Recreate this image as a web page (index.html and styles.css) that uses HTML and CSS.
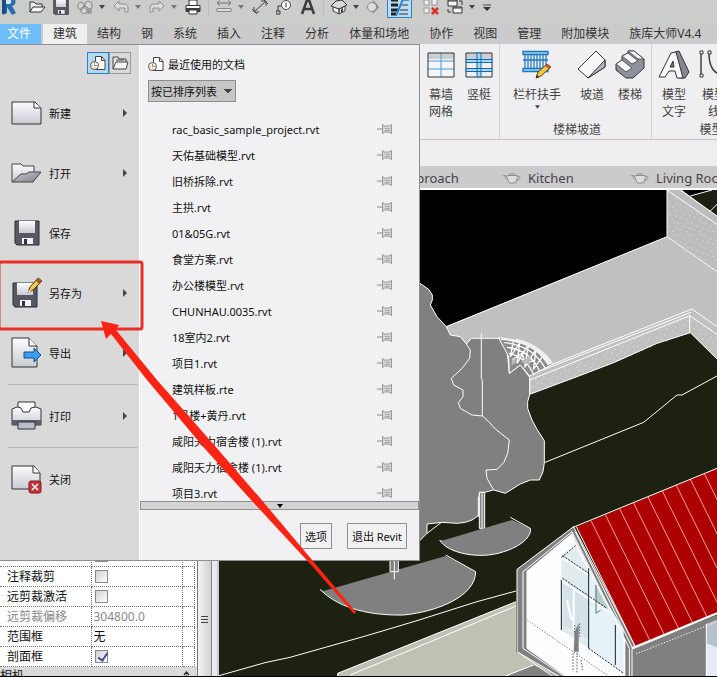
FILE: index.html
```html
<!DOCTYPE html>
<html lang="zh-CN">
<head>
  <meta charset="utf-8">
  <title>Revit</title>
  <link rel="stylesheet" href="styles.css">
</head>
<body>
  <svg class="defs" aria-hidden="true">
    <defs>
      <linearGradient id="metal" x1="0" y1="0" x2="0" y2="1">
        <stop offset="0" stop-color="#fdfdfe"/>
        <stop offset="1" stop-color="#c9cbd2"/>
      </linearGradient>
      <linearGradient id="steel" x1="0" y1="0" x2="1" y2="1">
        <stop offset="0" stop-color="#c8cad0"/>
        <stop offset="1" stop-color="#7e828b"/>
      </linearGradient>
      <symbol id="pin" viewBox="0 0 16 12">
        <path d="M0 6h5" stroke="#8c8c8c" fill="none"/>
        <path d="M5.5 1.500v9l2-1.500h4l3 1.500v-9l-3 1.500h-4z" fill="#d4d4d4" stroke="#999"/>
        <path d="M8 5.500h5M8 7.500h5" stroke="#aaa"/>
      </symbol>
      <symbol id="teapot" viewBox="0 0 18 12">
        <path d="M4 3.500h10c1 3-.5 5-2 7.500H6.500C5 8.500 3.500 6 4 3.500z" fill="#dcdedd" stroke="#8b908e"/>
        <path d="M4.500 8C2.500 7 2.500 4.500.5 3.500h2L4 5M14 4.500c3-1 3.500.5 2.500 2S14.500 8.500 13 9M5.500 3.500c1-2.500 6-2.500 7 0" fill="none" stroke="#8b908e"/>
      </symbol>
      <symbol id="caret" viewBox="0 0 6 4">
        <path d="M0 0h6L3 4z"/>
      </symbol>
      <symbol id="doc-clock" viewBox="0 0 18 18">
        <path d="M6.500 2.500h6l3.500 4v9H6.500z" fill="#fff" stroke="#444"/>
        <path d="M12.500 2.500v4H16" fill="none" stroke="#444"/>
        <circle cx="5.500" cy="11.500" r="4" fill="#fff" stroke="#555"/>
        <path d="M5.500 8.500v3h3M2.500 11.500h1M5.500 13.500v1" fill="none" stroke="#c77b45"/>
      </symbol>
      <symbol id="disk" viewBox="0 0 26 26">
        <path d="M1 1h24v24H3l-2-2z" fill="#565961" stroke="#2b2d33"/>
        <path d="M5 1h16v12H5z" fill="url(#metal)"/>
        <path d="M8 18h11v6H8z" fill="#f3f3f5"/>
        <path d="M10 19h3v5h-3z" fill="#333"/>
      </symbol>
      <pattern id="speckle" width="41" height="37" patternUnits="userSpaceOnUse">
        <path d="M3 5h3M19 14h3M33 3h3M10 25h3M27 30h3M37 20h3" stroke="#ededed" stroke-width="3"/>
      </pattern>
    </defs>
  </svg>

  <div class="app">
    <header class="quickbar">
      <button class="quick-logo" aria-label="Revit"><svg width="21" height="20" viewBox="0 0 21 20"><path d="M2 0h8c7 0 7 8 2 9l4 7-4 2-5-8v6l-4 2z" fill="#2b6cab"/><path d="M6 2h3c3 0 3 5 0 5H6z" fill="#d6e6f3"/><path d="M2 0l4 2v14l-4 1z" fill="#174f86"/></svg></button>
      <button class="quick" aria-label="打开"><svg width="16" height="16" viewBox="0 0 16 16"><path d="M1 13V3h4l2 2h6v3" fill="#eee" stroke="#333"/><path d="M1 13l3-5h12l-4 5z" fill="#f7f7f7" stroke="#333"/></svg></button>
      <button class="quick" aria-label="保存"><svg width="16" height="16"><use href="#disk"/></svg></button>
      <div class="split">
        <button class="quick" aria-label="同步"><svg width="16" height="16" viewBox="0 0 16 16"><path d="M1 5l3-2 3 2v4l-3 2-3-2zM8 4l3-2 4 2v5l-4 2-3-2zM4 9l4-2 3 2v4l-4 2-3-2z" fill="#d5d5d5" stroke="#858585"/><circle cx="12" cy="12" r="3" fill="#999"/></svg></button>
        <svg class="caret"><use href="#caret"/></svg>
      </div>
      <div class="split faded">
        <button class="quick" aria-label="放弃"><svg width="16" height="16" viewBox="0 0 16 16"><path d="M1 7l5-5v3h5c3 0 4 2 4 4v4h-3v-4H6v3z" fill="#ddd" stroke="#8d8d8d"/></svg></button>
        <svg class="caret"><use href="#caret"/></svg>
      </div>
      <div class="split faded">
        <button class="quick" aria-label="重做"><svg width="16" height="16" viewBox="0 0 16 16"><path d="M15 7l-5-5v3H5C2 5 1 7 1 9v4h3v-4h6v3z" fill="#ddd" stroke="#8d8d8d"/></svg></button>
        <svg class="caret"><use href="#caret"/></svg>
      </div>
      <button class="quick" aria-label="打印"><svg width="16" height="16" viewBox="0 0 16 16"><path d="M4 7V1h8v6" fill="#fff" stroke="#333"/><path d="M1 6.500h14v6H1z" fill="#fff" stroke="#333"/><path d="M1 9h14v3H1z" fill="#3e4046"/><path d="M4 11h8v4H4z" fill="#fff" stroke="#333"/></svg></button>
      <i class="quick-line"></i>
      <div class="split faded">
        <button class="quick" aria-label="测量"><svg width="16" height="16" viewBox="0 0 16 16"><path d="M1 4h14M4 1.500L1 4l3 2.500M12 1.500L15 4l-3 2.500" fill="none" stroke="#777"/><path d="M1 9.500h14v3H1z" fill="#ddd" stroke="#888"/></svg></button>
        <svg class="caret"><use href="#caret"/></svg>
      </div>
      <button class="quick" aria-label="对齐尺寸标注"><svg width="16" height="16" viewBox="0 0 16 16"><path d="M3 12L13 3M2 8v5h5M9 2h5v5M0 10l5 5M11 0l5 5" fill="none" stroke="#444"/></svg></button>
      <button class="quick" aria-label="标记"><svg width="16" height="16" viewBox="0 0 16 16"><circle cx="10" cy="6" r="4.500" fill="#fff" stroke="#444"/><path d="M10 3.500v5M5 7H2v5M0 12h4v3H0z" fill="none" stroke="#333"/></svg></button>
      <button class="quick" aria-label="文字"><svg width="16" height="16" viewBox="0 0 16 16"><path d="M2 15L7 1h2l5 14M4 10h8" fill="none" stroke="#3c3c3c" stroke-width="2.500"/></svg></button>
      <i class="quick-line"></i>
      <div class="split">
        <button class="quick" aria-label="三维视图"><svg width="16" height="16" viewBox="0 0 16 16"><path d="M2 7l6 3v5l-6-3zM8 10l6-3v5l-6 3z" fill="#eee" stroke="#444"/><path d="M0 7l5-5 6-1 5 5-8 4z" fill="#d9dade" stroke="#333"/><path d="M10 10l2-1v4l-2 1z" fill="#444"/></svg></button>
        <svg class="caret"><use href="#caret"/></svg>
      </div>
      <button class="quick narrow" aria-label="剖面"><svg width="12" height="14" viewBox="0 0 12 14"><path d="M6 0l6 7-6 7z" fill="#888"/><circle cx="5" cy="7" r="4.500" fill="#ddd" stroke="#888"/></svg></button>
      <button class="quick thin-lines" aria-label="细线"><svg width="19" height="17" viewBox="0 0 19 17"><path d="M1 1h7M1 6h7M1 11h7M1 15h5" stroke="#222" stroke-width="3"/><path d="M12 1h7M11 6h7M10 11h8M9 15h9" stroke="#333"/><path d="M13 0L6 17" stroke="#2d83cf" stroke-width="2"/></svg></button>
      <button class="quick" aria-label="关闭非活动视图"><svg width="16" height="16" viewBox="0 0 16 16"><path d="M1 1h5v5H1zM9 0h5v6H9zM1 9h5v5H1z" fill="#eee" stroke="#999"/><path d="M9 9l6 6M15 9l-6 6" stroke="#d3352d" stroke-width="2.500"/></svg></button>
      <div class="split">
        <button class="quick" aria-label="切换窗口"><svg width="16" height="16" viewBox="0 0 16 16"><path d="M1 1h9v6H1zM6 8h9v6H6z" fill="#f4f4f4" stroke="#333"/><path d="M1 2h9M6 9h9M12 2h3v4M1 10v3h3" fill="none" stroke="#333"/></svg></button>
        <svg class="caret"><use href="#caret"/></svg>
      </div>
      <button class="quick" aria-label="自定义快速访问工具栏"><svg width="8" height="7" viewBox="0 0 8 7"><path d="M0 1h8" stroke="#444"/><path d="M0 3h8L4 7z" fill="#333"/></svg></button>
    </header>

    <nav class="tabs">
      <button class="tab file-tab">文件</button>
      <button class="tab active">建筑</button>
      <button class="tab">结构</button>
      <button class="tab">钢</button>
      <button class="tab">系统</button>
      <button class="tab">插入</button>
      <button class="tab">注释</button>
      <button class="tab">分析</button>
      <button class="tab">体量和场地</button>
      <button class="tab">协作</button>
      <button class="tab">视图</button>
      <button class="tab">管理</button>
      <button class="tab">附加模块</button>
      <button class="tab">族库大师V4.4</button>
    </nav>

    <section class="ribbon">
      <div class="panel build">
        <div class="tools">
          <button class="tool">
            <svg width="28" height="28" viewBox="0 0 28 28"><path d="M1 2h26v24H1z" fill="#f3f5f7"/><path d="M1 2h26v6H1z" fill="#ccd0d5"/><path d="M1 10h26M1 18h26M14 2v24" stroke="#4a9bdc"/><path d="M1 2h26v24H1z" fill="none" stroke="#333"/></svg>
            幕墙<br>网格
          </button>
          <button class="tool">
            <svg width="28" height="28" viewBox="0 0 28 28"><path d="M1 2h26v24H1z" fill="#eef0f3"/><path d="M1 2h26v6H1z" fill="#ccd0d5"/><path d="M1 2h26v24H1z" fill="none" stroke="#333"/><path d="M1 8.500h26v3H1zM1 17.500h26v3H1zM12 2h4v24h-4z" fill="#a5dbf7" stroke="#1268ad"/></svg>
            竖梃
          </button>
        </div>
      </div>
      <div class="panel stairs">
        <div class="tools">
          <button class="tool wide">
            <svg width="30" height="30" viewBox="0 0 30 30"><path d="M1 1.500h25v3H1zM1 10h25M1 18.500h25v3H1z" fill="#9ed6f5" stroke="#1975bc" stroke-width="1.300"/><path d="M3 5v13M6 5v13M9 5v13M12 5v13M15 5v13M18 5v13M21 5v13M24 5v13" stroke="#247cbf" stroke-width="1.300"/><path d="M14 28l2-6 9-8 4 3-10 9z" fill="#f4c443" stroke="#5b4012"/><path d="M25 14l4 3-2 2-4-3z" fill="#c65632"/><path d="M14 28l1-3 2 2z" fill="#222"/></svg>
            栏杆扶手
            <svg class="drop"><use href="#caret"/></svg>
          </button>
          <button class="tool">
            <svg width="30" height="30" viewBox="0 0 30 30"><path d="M1 19L19 1l9 9v7L11 28z" fill="#f7f7f9" stroke="#333"/><path d="M11 28L28 10v7z" fill="#b5b8c0" stroke="#333"/></svg>
            坡道
          </button>
          <button class="tool">
            <svg width="30" height="30" viewBox="0 0 30 30"><path d="M1 14l6-4V6l6-3V1h6l10 8v9L18 28h-7L1 20z" fill="#8e929c" stroke="#333"/><path d="M1 14l6-4 10 8-6 4zM7 6l6-3 10 8-6 3zM13 1h6l10 8h-6z" fill="#f6f6f8" stroke="#555"/></svg>
            楼梯
          </button>
        </div>
        <div class="panel-title">楼梯坡道</div>
      </div>
      <div class="panel model">
        <div class="tools">
          <button class="tool">
            <svg width="32" height="30" viewBox="0 0 32 30"><path d="M17 2l4-1 10 21-4 6h-6z" fill="#85888f" stroke="#333"/><path d="M1 27L13 3l5-1 7 26h-6l-2-7h-6l-4 6z" fill="#f8f8f9" stroke="#333"/><path d="M12 17l3-6 1 6z" fill="#777" stroke="#333"/></svg>
            模型<br>文字
          </button>
          <button class="tool">
            <svg width="30" height="30" viewBox="0 0 30 30"><path d="M2 3v22M10 3c0 14 5 22 16 22" fill="none" stroke="#444" stroke-width="1.500"/><path d="M1 1h3v3H1zM1 24h3v3H1zM9 1h3v3H9z" fill="#fff" stroke="#333"/></svg>
            模型<br>线
          </button>
        </div>
        <div class="panel-title">模型</div>
      </div>
    </section>

    <div class="view-tabs">
      <button class="view-tab"><svg width="18" height="12"><use href="#teapot"/></svg>Approach</button>
      <button class="view-tab"><svg width="18" height="12"><use href="#teapot"/></svg>Kitchen</button>
      <button class="view-tab"><svg width="18" height="12"><use href="#teapot"/></svg>Living Room</button>
    </div>

    <main class="workspace">
      <aside class="properties">
        <table class="props">
          <tr><td></td><td><input type="checkbox" aria-label="裁剪"></td><td></td></tr>
          <tr><td><label for="anno-crop">注释裁剪</label></td><td><input type="checkbox" id="anno-crop"></td><td></td></tr>
          <tr><td><label for="far-clip">远剪裁激活</label></td><td><input type="checkbox" id="far-clip"></td><td></td></tr>
          <tr class="disabled"><td><label for="far-offset">远剪裁偏移</label></td><td><input type="text" id="far-offset" value="304800.0" disabled></td><td></td></tr>
          <tr><td><label for="scope-box">范围框</label></td><td><input type="text" id="scope-box" value="无"></td><td></td></tr>
          <tr><td><label for="section-box">剖面框</label></td><td><input type="checkbox" id="section-box" checked></td><td></td></tr>
        </table>
        <div class="props-group">相机<svg width="7" height="10" viewBox="0 0 7 10"><path d="M1 4l2.500-3L6 4M1 8l2.500-3L6 8" fill="none" stroke="#222" stroke-width="1.300"/></svg></div>
      </aside>
      <div class="sash"><div class="sash-track"><i></i><i></i><i></i></div></div>

      <!-- 3D view -->
      <svg class="view3d" viewBox="-594 90 1494 1461" preserveAspectRatio="xMinYMin slice">
        <rect x="-594" y="90" width="1494" height="1461" fill="#1d2111"/>
        <path d="M-594 90H900L750 230 0 560-594 700z" fill="#000"/>
        <path d="M820 108L885 90H900V168z" fill="#1d2111"/>

        <!-- site walls -->
        <path d="M60 510L750 230 900 335V597L820 518 720 550 590 608 480 650 338 703H60z" fill="#c0c0c0"/>
        <path d="M750 90H795L900 168V335L750 230z" fill="#bcbcbe"/>
        <path d="M750 90L900 193V335L750 230zM338 660L818 465 900 523V597L820 518 590 608 338 703z" fill="url(#speckle)"/>
        <g class="edge">
          <path d="M750 90V230L88 500M750 230L900 335M750 90L900 193M790 90L900 168M820 108L885 90M878 155L900 133"/>
          <path d="M408 612L825 447 900 500M338 645L822 457M338 660L818 467 900 523M818 467V518M338 650V703L480 650 590 608 720 550 820 518 900 597"/>
          <path d="M382 908L680 787 780 705H795L900 648"/>
          <path d="M-594 1547L-456 1508-381 1492-151 1427 0 1382 180 1325 297 1293"/>
        </g>

        <!-- trees -->
        <path class="shape" d="M-60 300L9 370 35 388 46 405V420L40 435 60 470 88 500 100 525 130 530 148 552 163 535H245L258 555 270 570 277 640 310 615 338 652V703L332 725V745L345 780 360 808 382 842V908L378 935 367 960H340L310 972 265 1000 230 990 203 997H187V1065L165 1080 145 1087 120 1090 75 1087 30 1092V1120L0 1150-60 1150z"/>
        <path d="M245 533Q370 545 408 612L338 648 310 615 277 640 275 590z" fill="#8b8b8b" stroke="#fff" stroke-width="3"/>
        <path d="M252 538q95 5 148 72M262 548q85 8 122 76M270 562q70 8 98 72M276 580q50 10 75 65M290 540l-10 50 28-40-8 60 35-58-12 70 34-54-8 60 30-42M285 600l30-20 10 30 30-10" fill="none" stroke="#fff" stroke-width="4"/>
        <path d="M300 536Q375 555 406 610L392 616Q362 562 290 542z" fill="#f0f0f0"/>
        <path d="M312 605l30-20-5 30zM284 600l12-6v14l-12 8z" fill="#bbb"/>
        <g class="edge">
          <path d="M148 552L160 570 158 595 135 625 103 655 110 675 138 690V710L124 728 130 745 165 765 197 768 217 787 235 807 277 840 272 880 260 908 240 928 207 930 210 955 230 990M193 520V655L196 662V768"/>
          <path d="M30 1120L72 1088"/>
        </g>
        <path class="shape" d="M187 997H203V1105H187z"/>
        <path class="edge" d="M195 1000V1105M184 1010V1070"/>
        <path d="M80 1141L285 1080 340 1105C345 1130 310 1160 260 1175 190 1200 90 1180 68 1140z" fill="#808080"/>
        <path class="edge" d="M280 1072L340 1105C345 1130 310 1160 260 1175 190 1200 90 1180 68 1140"/>
        <path d="M-280 1293L86 1188 176 1235C175 1310 60 1355-40 1365-130 1367-230 1350-291 1288z" fill="#808080"/>
        <path class="edge" d="M86 1185L176 1235C175 1310 60 1355-40 1365-130 1367-230 1350-291 1288"/>
        <path class="shape" d="M-81 1180V1235H-56V1180z"/>
        <path class="edge" d="M-68 1180V1258"/>

        <!-- terrace -->
        <path d="M-238 1540L297 1325V1475L430 1551H-238z" fill="#bec2b2"/>
        <path d="M265 1551L350 1515 420 1551z" fill="#808080"/>
        <path class="edge" d="M-238 1551V1540L297 1325M-200 1545L297 1338M265 1548L350 1515"/>

        <!-- house -->
        <path class="shape" d="M300 1228L470 1100 655 1460 645 1551H430L300 1475z"/>
        <path d="M330 1232L465 1120 625 1440V1551H450L330 1465z" fill="#fcfdfe"/>
        <path d="M433 1190L475 1160 515 1235V1465L433 1410z" fill="#e0ebee"/>
        <path d="M515 1235L590 1360 620 1410V1540L515 1465z" fill="#e6f1f8"/>
        <path d="M440 1262L515 1300V1440L478 1410 440 1400z" fill="#d3e2e6"/>
        <path d="M535 1275L575 1348 535 1335z" fill="#b4cccb"/>
        <path d="M450 1320l12 55 8 5v-100M470 1320v90M433 1192L515 1245M433 1262L575 1355" fill="none" stroke="#fff" stroke-width="6"/>
        <path d="M433 1260V1410M515 1225V1465M595 1395V1515" fill="none" stroke="#152029" stroke-width="3"/>
        <path d="M537 1275V1360l14-10" fill="none" stroke="#5d7775" stroke-width="3"/>
        <path d="M437 1187L515 1240M437 1255L570 1345M515 1465L620 1540M433 1192L478 1155" fill="none" stroke="#222" stroke-width="3" stroke-dasharray="6 4"/>
        <path d="M330 1380L570 1545" fill="none" stroke="#777" stroke-width="3" stroke-dasharray="4 5"/>
        <path d="M470 1475l3-60 12-25v85z" fill="#808080"/>
        <path d="M468 1480v55M480 1478v60M473 1395v30M488 1390v40M492 1500l5 30" stroke="#666" stroke-width="3" stroke-dasharray="5 4"/>
        <path class="edge" d="M318 1465V1235L465 1115 637 1465V1551M318 1465L445 1551M330 1232V1465L450 1551M300 1475L410 1551M475 1115L648 1468V1551"/>
        <path d="M645 1465L900 1365V1551H645z" fill="#808080"/>
        <path d="M868 1392L900 1380V1551H868z" fill="#e5ecf8"/>
        <path d="M868 1392L900 1380V1462L868 1450z" fill="#b8c0cb"/>
        <path class="edge" d="M868 1392V1551M645 1465V1551"/>
        <path d="M657 1482L900 1385" stroke="#fff" stroke-width="3" stroke-dasharray="4 5"/>
        <path d="M478 1100L900 925V1360L655 1460z" fill="#ad0000"/>
        <path d="M522 1082l177 360M565 1064l177 360M608 1046l177 360M650 1029l177 360M693 1011l177 360M736 993l177 360M778 976l177 360M820 958l177 360M862 941l177 360" fill="none" stroke="#ef9d9d" stroke-width="3"/>
        <path class="edge" d="M468 1102L900 925M478 1100L655 1460"/>
        <path d="M645 1465L900 1360" stroke="#fff" stroke-width="7"/>
      </svg>
    </main>

    <!-- file menu, open over the workspace -->
    <div class="file-menu">
      <div class="commands">
        <div class="list-switch">
          <button class="switch on" aria-label="最近使用的文档"><svg width="18" height="18"><use href="#doc-clock"/></svg></button>
          <button class="switch" aria-label="打开的文档"><svg width="18" height="18" viewBox="0 0 18 18"><path d="M2 15V3h5l1 2h7v3" fill="#e8e8e8" stroke="#444"/><path d="M2 15l3-7h12l-2 7zM5 6h8" fill="#f4f4f4" stroke="#444"/></svg></button>
        </div>
        <button class="command">
          <svg width="32" height="28" viewBox="0 0 32 28"><path d="M1 3h23l6 6v16H1z" fill="url(#metal)" stroke="#333"/><path d="M23 3v6h7" fill="#fff" stroke="#333"/></svg>
          <span>新建</span><i class="more"></i>
        </button>
        <button class="command">
          <svg width="32" height="28" viewBox="0 0 32 28"><path d="M1 23V5h9l2 2h11v9" fill="url(#metal)" stroke="#444"/><path d="M1 23l9-8h5l3-2h12l-8 10z" fill="url(#steel)" stroke="#444"/></svg>
          <span>打开</span><i class="more"></i>
        </button>
        <button class="command">
          <svg width="32" height="28" viewBox="0 0 32 28"><use href="#disk" x="3" y="1" width="26" height="26"/></svg>
          <span>保存</span>
        </button>
        <button class="command">
          <svg width="32" height="32" viewBox="0 0 32 32"><use href="#disk" x="1" y="5" width="26" height="26"/><path d="M17 16l2-6 8-9 4 3-9 9z" fill="#f5c849" stroke="#4e3b15"/><path d="M27 1l4 3-3 3-3-3z" fill="#9b5a31"/><path d="M17 16l1-3 2 2z" fill="#fff"/></svg>
          <span>另存为</span><i class="more"></i>
        </button>
        <button class="command">
          <svg width="32" height="32" viewBox="0 0 32 32"><path d="M1 1h17l8 8v21H1z" fill="url(#metal)" stroke="#333"/><path d="M18 1v8h8" fill="#fff" stroke="#333"/><path d="M13 15h10v-4l7 7-7 7v-4H13z" fill="#3d9df0" stroke="#174c85"/></svg>
          <span>导出</span><i class="more"></i>
        </button>
        <hr>
        <button class="command">
          <svg width="32" height="32" viewBox="0 0 32 32"><path d="M1 9l5-2h19l5 2v16H1z" fill="url(#metal)" stroke="#333"/><path d="M1 20h29v5H1z" fill="#5c5f68"/><path d="M7 2h17v5l-4 1-2 4h-6l-2-4-3-1z" fill="#fff" stroke="#333"/><path d="M7 22h17v7H7z" fill="#b6bfca" stroke="#333"/></svg>
          <span>打印</span><i class="more"></i>
        </button>
        <hr>
        <button class="command">
          <svg width="32" height="30" viewBox="0 0 32 30"><path d="M1 2h22l6 7v16H1z" fill="url(#metal)" stroke="#333"/><path d="M22 2v7h7" fill="#fff" stroke="#333"/><rect x="18" y="17" width="12" height="12" rx="2" fill="#c63439" stroke="#7b1b1f"/><path d="M21 20l6 6M27 20l-6 6" stroke="#fff" stroke-width="1.500"/></svg>
          <span>关闭</span>
        </button>
      </div>

      <div class="recent">
        <h2><svg width="18" height="18"><use href="#doc-clock"/></svg>最近使用的文档</h2>
        <select class="sort" aria-label="排序">
          <option>按已排序列表</option>
        </select>
        <ul class="files">
          <li><a href="#">rac_basic_sample_project.rvt</a><svg><use href="#pin"/></svg></li>
          <li><a href="#">天佑基础模型.rvt</a><svg><use href="#pin"/></svg></li>
          <li><a href="#">旧桥拆除.rvt</a><svg><use href="#pin"/></svg></li>
          <li><a href="#">主拱.rvt</a><svg><use href="#pin"/></svg></li>
          <li><a href="#">01&amp;05G.rvt</a><svg><use href="#pin"/></svg></li>
          <li><a href="#">食堂方案.rvt</a><svg><use href="#pin"/></svg></li>
          <li><a href="#">办公楼模型.rvt</a><svg><use href="#pin"/></svg></li>
          <li><a href="#">CHUNHAU.0035.rvt</a><svg><use href="#pin"/></svg></li>
          <li><a href="#">18室内2.rvt</a><svg><use href="#pin"/></svg></li>
          <li><a href="#">项目1.rvt</a><svg><use href="#pin"/></svg></li>
          <li><a href="#">建筑样板.rte</a><svg><use href="#pin"/></svg></li>
          <li><a href="#">1号楼+黄丹.rvt</a><svg><use href="#pin"/></svg></li>
          <li><a href="#">咸阳天力宿舍楼 (1).rvt</a><svg><use href="#pin"/></svg></li>
          <li><a href="#">咸阳天力宿舍楼 (1).rvt</a><svg><use href="#pin"/></svg></li>
          <li><a href="#">项目3.rvt</a><svg><use href="#pin"/></svg></li>
        </ul>
        <button class="scroll-down" aria-label="向下滚动"><svg width="8" height="4"><use href="#caret"/></svg></button>
        <footer class="menu-footer">
          <button>选项</button>
          <button>退出 Revit</button>
        </footer>
      </div>
    </div>

    <!-- marks the save-as command -->
    <svg class="callout" width="360" height="620" aria-hidden="true">
      <rect x="-1" y="262" width="143" height="67" rx="2" fill="none" stroke="#e92f26" stroke-width="3"/>
      <path d="M101 321L119 325 116 330 157 380 215 446 260 498 318 567 356 612 354 614 313 567 252 501 206 450 147 380 111 334 106 339z" fill="#fb2414"/>
    </svg>
  </div>
</body>
</html>
```

FILE: styles.css
```css
* {
  box-sizing: border-box;
}

body {
  margin: 0;
  background: #000;
  color: #222;
  font-family: "Noto Sans", "Noto Sans CJK SC", sans-serif;
  font-size: 12px;
}

button,
input,
select {
  margin: 0;
  padding: 0;
  border: none;
  background: none;
  color: inherit;
  font: inherit;
}

.defs {
  position: absolute;
  width: 0;
  height: 0;
}

.app {
  position: relative;
  display: flex;
  flex-direction: column;
  height: 100vh;
  overflow: hidden;
  border-bottom: 1px solid #000;
}

/* quick access toolbar */
.quickbar {
  display: flex;
  flex: none;
  align-items: center;
  gap: 8px;
  height: 24px;
  padding-bottom: 10px;
  background: #cbcdcb;
}

.quick,
.quick-logo {
  display: flex;
  flex: none;
}

.narrow {
  width: 12px;
}

.split {
  display: flex;
  align-items: center;
  gap: 6px;
}

.caret {
  width: 6px;
  height: 4px;
  fill: #444;
}

.faded .caret {
  fill: #777;
}

.quick-line {
  flex: none;
  width: 1px;
  height: 20px;
  margin: 0 -1px;
  background: #b9b9b9;
}

.thin-lines {
  align-items: center;
  justify-content: center;
  width: 25px;
  height: 22px;
  margin-right: 3px;
  border: 1px solid #2f82cb;
  background: #b9dcf7;
}

/* ribbon tabs */
.tabs {
  display: flex;
  flex: none;
  height: 20px;
  background: #cbcbcb;
}

.tab {
  flex: none;
  padding: 0 10px;
  line-height: 20px;
  color: #333;
}

.tab.active {
  background: #efeff0;
}

.tab.file-tab {
  margin-right: 2px;
  padding-left: 7px;
  background: #6dbdfb;
  color: #fff;
}

/* ribbon */
.ribbon {
  display: flex;
  flex: none;
  height: 96px;
  padding-left: 420px;
  border-bottom: 1px solid #c4c4c8;
  background: #efeff1;
  overflow: hidden;
}

.panel {
  display: flex;
  flex: none;
  flex-direction: column;
  justify-content: space-between;
  padding: 6px 2px 0 2px;
  border-right: 1px solid #d2d2d6;
}

.panel.build {
  width: 80px;
}

.panel.stairs {
  width: 152px;
  padding-left: 5px;
}

.panel.model {
  width: 120px;
}

.tools {
  display: flex;
}

.tool {
  display: flex;
  flex: none;
  flex-direction: column;
  align-items: center;
  width: 38px;
  line-height: 17px;
  color: #444;
}

.tool svg {
  height: 30px;
  margin-bottom: 6px;
}

.tool.wide {
  width: 64px;
  margin-right: 4px;
}

.panel.model .tool {
  width: 40px;
}

.tool .drop {
  width: 5px;
  height: 4px;
  margin-top: 2px;
  fill: #444;
}

.panel-title {
  line-height: 18px;
  text-align: center;
  color: #444;
}

/* open views */
.view-tabs {
  display: flex;
  flex: none;
  height: 50px;
  padding: 28px 0 0 375px;
  border-bottom: 2px solid #fff;
  background: linear-gradient(#efedf0 26px, #cccacd 26px);
}

.view-tab {
  display: flex;
  flex: none;
  align-items: center;
  gap: 7px;
  width: 128px;
  font-size: 13px;
  color: #444;
  white-space: nowrap;
}

.workspace {
  display: flex;
  flex: 1;
  min-height: 0;
}

/* properties palette */
.properties {
  flex: none;
  width: 197px;
  padding-top: 356px;
  background: #fff;
  overflow: hidden;
}

.props {
  width: 195px;
  table-layout: fixed;
  border-collapse: collapse;
  color: #111;
}

.props td {
  height: 20px;
  padding: 0 0 0 2px;
  border-right: 1px dotted #777;
  border-bottom: 1px dotted #777;
  line-height: 19px;
}

.props td:first-child {
  width: 91px;
  padding-left: 7px;
}

.props td:last-child {
  width: 12px;
}

.props label {
  display: block;
}

.props .disabled {
  color: #888;
}

.props input {
  display: block;
}

.props input[type="text"] {
  width: 88px;
  height: 19px;
}

.props input[type="checkbox"] {
  width: 13px;
  height: 13px;
  margin-left: 1px;
  appearance: none;
  border: 1px solid #8a8a8a;
  background: linear-gradient(135deg, #cfcfd2, #fff);
}

.props input[type="checkbox"]:checked::after {
  content: "";
  display: block;
  width: 4px;
  height: 8px;
  margin: 0 0 0 4px;
  border: solid #3b4b9b;
  border-width: 0 2px 2px 0;
  transform: rotate(35deg);
}

.props-group {
  display: flex;
  justify-content: space-between;
  padding-right: 7px;
  background: #dadada;
  line-height: 18px;
  color: #222;
}

.props-group svg {
  margin-top: 4px;
}

.sash {
  flex: none;
  width: 22px;
  padding-right: 5px;
  border-left: 1px solid #777;
  border-right: 2px solid #c9c9ce;
  background: #e9e9ee;
}

.sash-track {
  display: flex;
  flex-direction: column;
  gap: 2px;
  height: 100%;
  padding: 426px 3px 0 3px;
  border-right: 1px solid #888;
  background: linear-gradient(to right, #f4f4f6, #cfcfd4);
}

.sash-track i {
  height: 1px;
  background: #444;
}

.view3d {
  display: block;
  flex: 1;
  min-width: 0;
  height: 100%;
}

.edge {
  fill: none;
  stroke: #fff;
  stroke-width: 3;
}

.shape {
  fill: #808080;
  stroke: #fff;
  stroke-width: 3;
}

/* file menu */
.file-menu {
  position: absolute;
  top: 44px;
  left: 0;
  display: flex;
  width: 420px;
  border: solid #8f8f92;
  border-width: 1px 1px 1px 0;
  background: #f1f1f3;
  font-size: 11px;
  color: #111;
}

.commands {
  flex: none;
  width: 140px;
  padding-top: 7px;
  border-right: 1px solid #fff;
  background: #d9d9da;
}

.list-switch {
  display: flex;
  justify-content: flex-end;
  margin: 0 8px 9px 0;
}

.switch {
  display: flex;
  align-items: center;
  justify-content: center;
  width: 22px;
  height: 22px;
  border: 1px solid #999;
}

.switch.on {
  border-color: #2d7fc6;
  background: #b5d8f5;
}

.command {
  display: flex;
  align-items: center;
  width: 100%;
  height: 60px;
  padding: 0 12px 0 11px;
  text-align: left;
}

.command svg {
  flex: none;
}

.command span {
  flex: 1;
  padding-left: 6px;
}

.more {
  border: solid transparent;
  border-width: 4px 0 4px 4px;
  border-left-color: #444;
}

.commands hr {
  height: 1px;
  margin: 1px 2px 1px 8px;
  border: none;
  background: #b4b4b6;
}

.recent {
  flex: 1;
  min-width: 0;
}

.recent h2 {
  display: flex;
  align-items: center;
  gap: 3px;
  height: 35px;
  margin: 0;
  padding: 2px 0 0 7px;
  font-size: 11px;
  font-weight: normal;
}

.sort {
  display: block;
  width: 88px;
  height: 22px;
  margin-left: 8px;
  padding-left: 2px;
  appearance: none;
  border: 1px solid #8f8f8f;
  background: linear-gradient(#444, #444) no-repeat 75px 8px / 8px 1px,
    linear-gradient(#444, #444) no-repeat 76px 9px / 6px 1px,
    linear-gradient(#444, #444) no-repeat 77px 10px / 4px 1px,
    linear-gradient(#444, #444) no-repeat 78px 11px / 2px 1px,
    #c6c6c7;
}

.files {
  height: 385px;
  margin: 14px 0 0;
  padding: 0;
  list-style: none;
  overflow: hidden;
}

.files li {
  display: flex;
  align-items: center;
  justify-content: space-between;
  height: 26px;
  padding: 0 26px 0 32px;
}

.files a {
  color: #111;
  text-decoration: none;
}

.files svg {
  width: 16px;
  height: 12px;
}

.scroll-down {
  display: flex;
  align-items: center;
  justify-content: center;
  width: 100%;
  height: 9px;
  border: 1px solid #8f8f8f;
  background: #d4d4d5;
}

.menu-footer {
  display: flex;
  justify-content: flex-end;
  gap: 15px;
  padding: 13px 12px 11px 0;
}

.menu-footer button {
  height: 26px;
  padding: 0 4px;
  border: 1px solid #8f8f8f;
}

.callout {
  position: absolute;
  top: 0;
  left: 0;
  pointer-events: none;
}
```
